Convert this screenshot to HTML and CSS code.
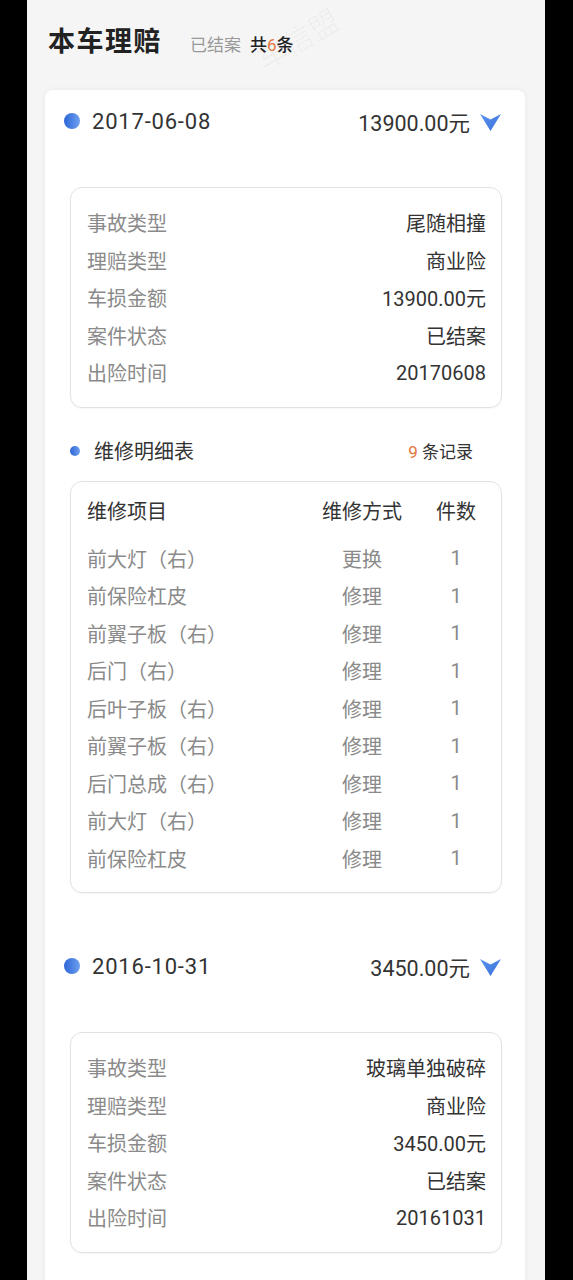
FILE: index.html
```html
<!DOCTYPE html>
<html lang="zh-CN">
<head>
<meta charset="utf-8">
<title>本车理赔</title>
<link rel="stylesheet" href="styles.css">
</head>
<body>
<div class="page">
  <div class="wm wm1">车信盟</div>

  <div class="title-row">
    <h1 class="title">本车理赔</h1>
    <span class="status">已结案</span>
    <span class="count">共<b class="num">6</b>条</span>
  </div>

  <div class="card">
    <div class="rec-head">
      <span class="dot"></span>
      <span class="date">2017-06-08</span>
      <span class="amount">13900.00元</span>
      <svg class="arrow" width="21" height="17" viewBox="0 0 21 17">
        <defs><linearGradient id="ag1" x1="0" y1="0" x2="1" y2="1"><stop offset="0" stop-color="#5b95ef"/><stop offset="1" stop-color="#3a6fd9"/></linearGradient></defs>
        <path d="M0 0 L10.5 5.5 L21 0 L10.5 17 Z" fill="url(#ag1)"/>
      </svg>
    </div>

    <div class="box info">
      <div class="kv"><span class="k">事故类型</span><span class="v">尾随相撞</span></div>
      <div class="kv"><span class="k">理赔类型</span><span class="v">商业险</span></div>
      <div class="kv"><span class="k">车损金额</span><span class="v">13900.00元</span></div>
      <div class="kv"><span class="k">案件状态</span><span class="v">已结案</span></div>
      <div class="kv"><span class="k">出险时间</span><span class="v">20170608</span></div>
    </div>

    <div class="sec-head">
      <span class="sdot"></span>
      <span class="sec-title">维修明细表</span>
      <span class="rec-count"><b class="num">9</b> 条记录</span>
    </div>

    <div class="box table">
      <div class="tr th"><span>维修项目</span><span class="c2">维修方式</span><span class="c3">件数</span></div>
      <div class="tr"><span>前大灯（右）</span><span class="c2">更换</span><span class="c3">1</span></div>
      <div class="tr"><span>前保险杠皮</span><span class="c2">修理</span><span class="c3">1</span></div>
      <div class="tr"><span>前翼子板（右）</span><span class="c2">修理</span><span class="c3">1</span></div>
      <div class="tr"><span>后门（右）</span><span class="c2">修理</span><span class="c3">1</span></div>
      <div class="tr"><span>后叶子板（右）</span><span class="c2">修理</span><span class="c3">1</span></div>
      <div class="tr"><span>前翼子板（右）</span><span class="c2">修理</span><span class="c3">1</span></div>
      <div class="tr"><span>后门总成（右）</span><span class="c2">修理</span><span class="c3">1</span></div>
      <div class="tr"><span>前大灯（右）</span><span class="c2">修理</span><span class="c3">1</span></div>
      <div class="tr"><span>前保险杠皮</span><span class="c2">修理</span><span class="c3">1</span></div>
    </div>

    <div class="rec-head second">
      <span class="dot"></span>
      <span class="date">2016-10-31</span>
      <span class="amount">3450.00元</span>
      <svg class="arrow" width="21" height="17" viewBox="0 0 21 17">
        <defs><linearGradient id="ag2" x1="0" y1="0" x2="1" y2="1"><stop offset="0" stop-color="#5b95ef"/><stop offset="1" stop-color="#3a6fd9"/></linearGradient></defs>
        <path d="M0 0 L10.5 5.5 L21 0 L10.5 17 Z" fill="url(#ag2)"/>
      </svg>
    </div>

    <div class="box info">
      <div class="kv"><span class="k">事故类型</span><span class="v">玻璃单独破碎</span></div>
      <div class="kv"><span class="k">理赔类型</span><span class="v">商业险</span></div>
      <div class="kv"><span class="k">车损金额</span><span class="v">3450.00元</span></div>
      <div class="kv"><span class="k">案件状态</span><span class="v">已结案</span></div>
      <div class="kv"><span class="k">出险时间</span><span class="v">20161031</span></div>
    </div>
  </div>
</div>
</body>
</html>
```

FILE: styles.css
```css
html, body {
  margin: 0;
  padding: 0;
  background: #000;
}
body {
  font-family: Roboto, "Noto Sans CJK SC", sans-serif;
  color: #333;
}
.page {
  position: relative;
  width: 518px;
  margin-left: 27px;
  height: 1280px;
  background: #f5f5f5;
  overflow: hidden;
}
.wm {
  position: absolute;
  font-size: 30px;
  color: rgba(0, 0, 0, 0.03);
  transform: rotate(-30deg);
  white-space: nowrap;
  pointer-events: none;
  z-index: 2;
}
.wm1 { left: 225px; top: 16px; }

.title-row {
  display: flex;
  align-items: baseline;
  padding: 25px 0 0 21px;
  height: 41px;
}
.title {
  margin: 0;
  font-size: 27px;
  line-height: 34px;
  font-weight: bold;
  color: #222;
  letter-spacing: 1.5px;
}
.status {
  margin-left: 28px;
  font-size: 17px;
  color: #999;
}
.count {
  margin-left: 9px;
  font-size: 17px;
  color: #222;
  font-weight: 500;
}
.num {
  font-weight: normal;
  color: #e5763f;
}

.card {
  margin: 24px 20px 0 18px;
  background: #fff;
  border-radius: 8px 8px 0 0;
  box-shadow: 0 0 6px rgba(0, 0, 0, 0.05);
  padding: 16px 23px 40px 25px;
  min-height: 1200px;
}
.rec-head {
  display: flex;
  align-items: center;
  height: 30px;
  margin-left: -6px;
  margin-right: 1px;
}
.rec-head.second {
  margin-top: 58px;
}
.dot {
  width: 16px;
  height: 16px;
  border-radius: 50%;
  background: linear-gradient(90deg, #2c66d6, #6f9ff0);
}
.date {
  margin-left: 12px;
  font-size: 22px;
  letter-spacing: 0.8px;
  color: #333;
  flex: 1;
}
.amount {
  font-size: 21.5px;
  color: #333;
}
.arrow {
  margin-left: 10px;
  margin-top: 2px;
}

.box {
  border: 1px solid #e2e2e2;
  border-radius: 12px;
  box-shadow: 0 1px 2px rgba(0, 0, 0, 0.04);
}
.info {
  margin-top: 51px;
  padding: 16px 15px 15px 16px;
}
.kv {
  display: flex;
  justify-content: space-between;
  align-items: center;
  height: 37.5px;
  font-size: 20px;
}
.k {
  color: #8a8a8a;
}
.v {
  color: #333;
}

.sec-head {
  display: flex;
  align-items: center;
  height: 30px;
  margin-top: 28px;
  padding-right: 29px;
}
.sdot {
  width: 10px;
  height: 10px;
  border-radius: 50%;
  background: linear-gradient(90deg, #2c66d6, #6f9ff0);
}
.sec-title {
  margin-left: 14px;
  font-size: 20px;
  color: #333;
  flex: 1;
}
.rec-count {
  font-size: 17px;
  color: #333;
}

.table {
  margin-top: 15px;
  padding: 10px 20px 15px 16px;
}
.tr {
  display: grid;
  grid-template-columns: 1fr 100px 50px;
  column-gap: 19px;
  align-items: center;
  height: 37.5px;
  font-size: 20px;
  color: #8a8a8a;
}
.tr.th {
  color: #333;
  margin-bottom: 10.5px;
}
.c2, .c3 {
  text-align: center;
}
```
